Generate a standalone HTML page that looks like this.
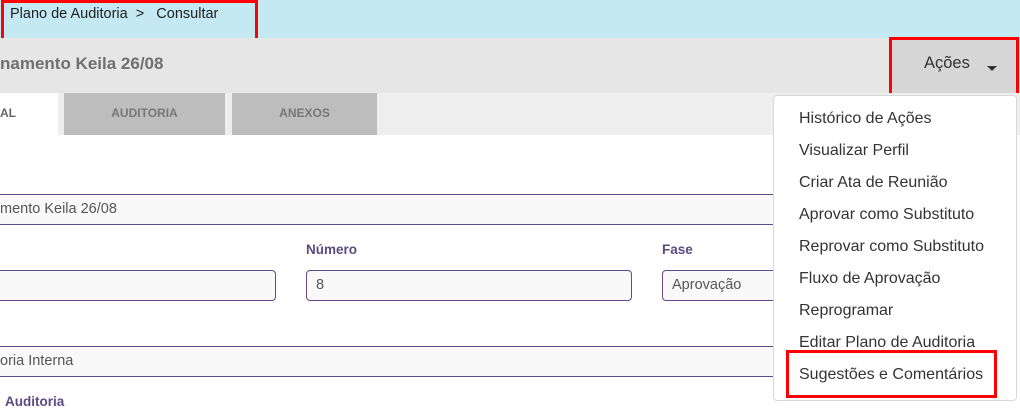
<!DOCTYPE html>
<html><head><meta charset="utf-8"><style>
*{margin:0;padding:0;box-sizing:border-box}
body{width:1020px;height:410px;overflow:hidden;background:#fff;font-family:"Liberation Sans","DejaVu Sans",sans-serif;position:relative}
.a{position:absolute}
.top{left:0;top:0;width:1020px;height:38px;background:#c4e9f3}
.hdr{left:0;top:38px;width:1020px;height:55px;background:#e6e6e6}
.tabs{left:0;top:93px;width:1020px;height:42px;background:#eeeeee}
.tab{top:93px;height:42px;background:#bdbdbd;color:#777;font-weight:bold;font-size:12px;text-align:center;line-height:40px}
.inp{background:#f9f9f9;border:1px solid #5e4b8b;font-size:14.5px;color:#555;line-height:28px;padding-left:9px;height:31px}
.lbl{font-weight:bold;font-size:13.5px;color:#5b4a82}
.menu{left:773px;top:95px;width:244px;height:306px;background:#fff;border:1px solid #d8d8d8;border-radius:4px}
.mi{left:799px;font-size:16px;color:#333}
.red{border:3px solid #f00}
</style></head><body>
<div class="a top"></div>
<div class="a" style="left:10px;top:6px;font-size:14.5px;color:#222">Plano de Auditoria &nbsp;&gt;&nbsp;&nbsp; Consultar</div>
<div class="a red" style="left:1px;top:0;width:257px;height:42px"></div>
<div class="a hdr"></div>
<div class="a" style="left:0;top:54px;font-size:17px;font-weight:bold;color:#707070">namento Keila 26/08</div>
<div class="a" style="left:891px;top:38px;width:127px;height:64px;background:#d6d6d6"></div>
<div class="a" style="left:924px;top:54px;font-size:16.5px;color:#333">Ações</div>
<div class="a" style="left:987px;top:66px;width:0;height:0;border-left:5px solid transparent;border-right:5px solid transparent;border-top:5px solid #333"></div>
<div class="a red" style="left:889px;top:37px;width:130px;height:67px"></div>
<div class="a tabs"></div>
<div class="a" style="left:0;top:93px;width:58px;height:42px;background:#fff;font-weight:bold;font-size:12px;color:#666;line-height:40px">AL</div>
<div class="a tab" style="left:64px;width:161px">AUDITORIA</div>
<div class="a tab" style="left:232px;width:145px">ANEXOS</div>
<div class="a inp" style="left:-5px;top:194px;width:800px;border-left:none;padding-left:5px">mento Keila 26/08</div>
<div class="a lbl" style="left:306px;top:242px">Número</div>
<div class="a lbl" style="left:662px;top:242px">Fase</div>
<div class="a inp" style="left:-10px;top:270px;width:286px;border-radius:4px"></div>
<div class="a inp" style="left:306px;top:270px;width:326px;border-radius:4px">8</div>
<div class="a inp" style="left:662px;top:270px;width:140px;border-radius:4px">Aprovação</div>
<div class="a inp" style="left:-5px;top:346px;width:800px;border-left:none;padding-left:5px">oria Interna</div>
<div class="a lbl" style="left:5px;top:394px">Auditoria</div>
<div class="a menu"></div>
<div class="a mi" style="top:110px">Histórico de Ações</div>
<div class="a mi" style="top:142px">Visualizar Perfil</div>
<div class="a mi" style="top:174px">Criar Ata de Reunião</div>
<div class="a mi" style="top:206px">Aprovar como Substituto</div>
<div class="a mi" style="top:238px">Reprovar como Substituto</div>
<div class="a mi" style="top:270px">Fluxo de Aprovação</div>
<div class="a mi" style="top:302px">Reprogramar</div>
<div class="a mi" style="top:334px">Editar Plano de Auditoria</div>
<div class="a mi" style="top:366px">Sugestões e Comentários</div>
<div class="a red" style="left:786px;top:350px;width:211px;height:48px"></div>
</body></html>
